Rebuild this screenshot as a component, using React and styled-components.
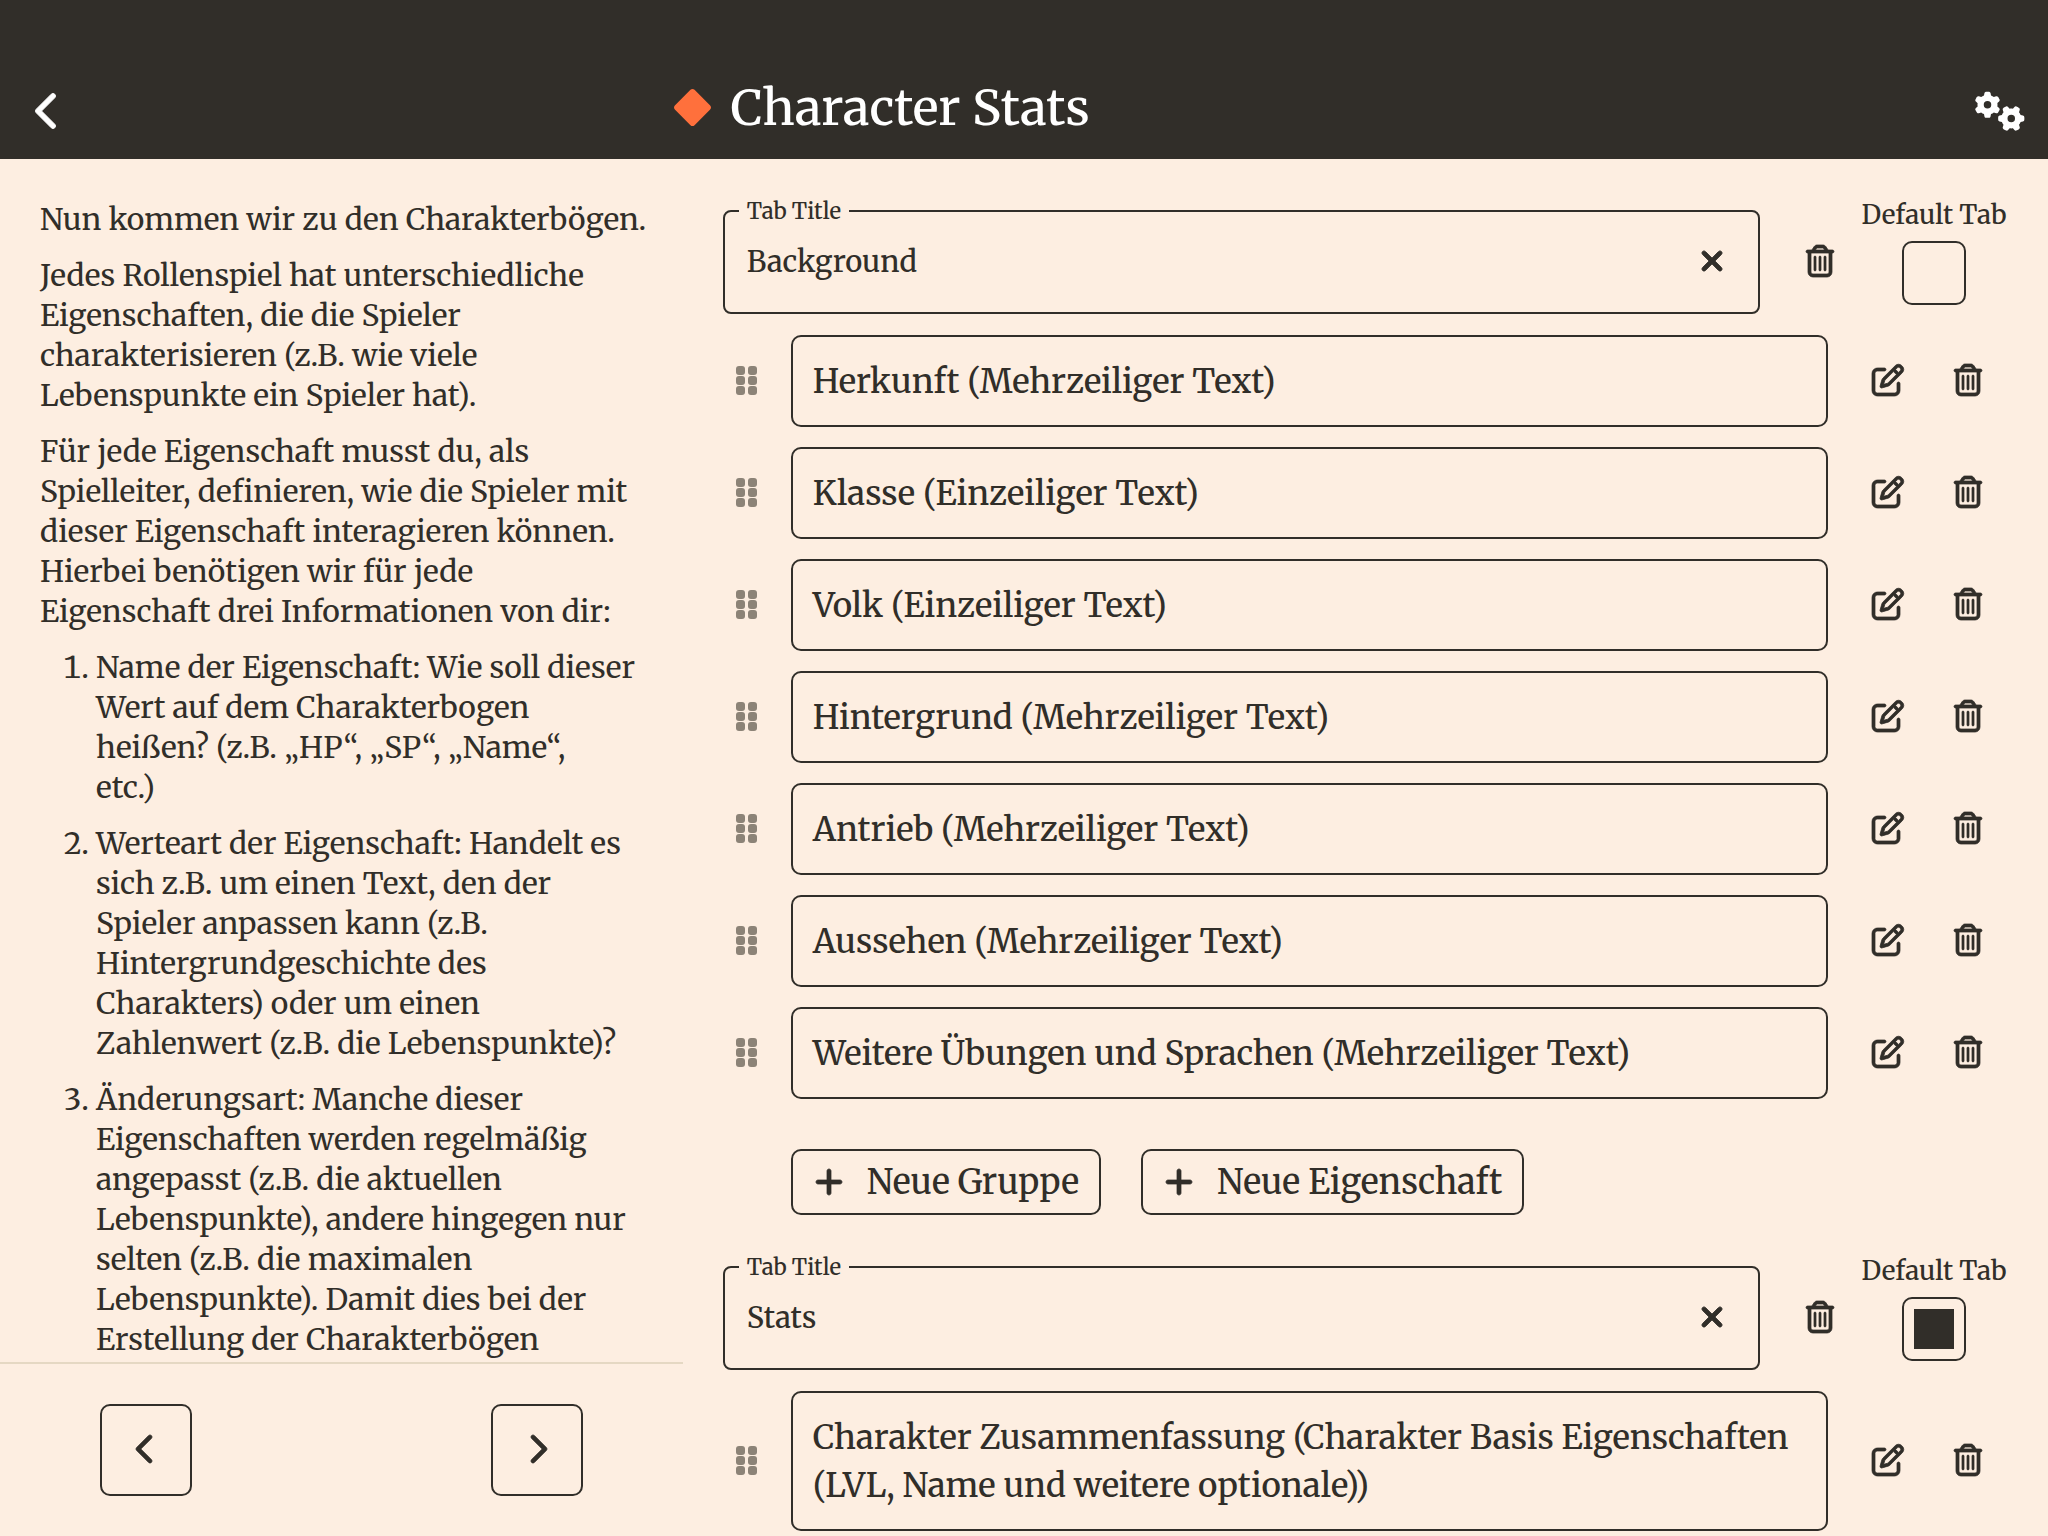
import React, { useState } from "react";
import styled, { createGlobalStyle } from "styled-components";
import {
  FaChevronLeft,
  FaChevronRight,
  FaDiamond,
  FaGears,
  FaPlus,
  FaRegPenToSquare,
  FaRegTrashCan,
  FaXmark,
} from "react-icons/fa6";

const ink = "#312e29";
const paper = "#fdeee1";

const GlobalStyle = createGlobalStyle`
  * { box-sizing: border-box; }
  html, body, #root { height: 100%; }
  body {
    margin: 0;
    background: ${paper};
    color: ${ink};
    font-family: "Merriweather", "DejaVu Serif Condensed", "DejaVu Serif", serif;
    font-weight: 500;
    font-variant-numeric: oldstyle-nums;
    overflow: hidden;
  }
  button, input { font: inherit; color: inherit; }
`;

const Screen = styled.div`
  display: flex;
  flex-direction: column;
  height: 100vh;
`;

const Header = styled.header`
  flex: none;
  display: grid;
  grid-template-columns: 1fr minmax(0, 706px) 1fr;
  align-items: center;
  padding: 62px 23px 0 28px;
  height: 159px;
  background: ${ink};
  color: #fff;
`;

const PlainButton = styled.button`
  display: flex;
  align-items: center;
  justify-content: center;
  padding: 0;
  border: 0;
  background: none;
  cursor: pointer;
`;

const BackButton = styled(PlainButton)`
  justify-self: start;

  path { stroke: currentColor; stroke-width: 12px; }
`;

const SettingsButton = styled(PlainButton)`
  justify-self: end;
`;

const Title = styled.h1`
  display: flex;
  align-items: center;
  gap: 20px;
  margin: 0;
  padding-bottom: 6px;
  font-size: 49px;
  line-height: 56px;
  font-weight: 500;
  white-space: nowrap;

  svg { color: #ff703c; }
`;

const Main = styled.main`
  flex: 1;
  min-height: 0;
  display: grid;
  grid-template-columns: minmax(0, 1fr) minmax(0, 2fr);
`;

const Guide = styled.aside`
  display: flex;
  flex-direction: column;
  min-height: 0;
`;

const GuideText = styled.div`
  flex: 1;
  min-height: 0;
  overflow: hidden;
  padding: 40px 24px 0 40px;
  font-size: 30px;
  line-height: 40px;
  font-weight: 400;

  p { margin: 0 0 16px; white-space: pre-line; }
`;

const Steps = styled.ol`
  margin: 0;
  padding-left: 56px;

  li { margin-bottom: 16px; white-space: pre-line; }
`;

const GuideNav = styled.nav`
  flex: none;
  display: flex;
  justify-content: space-between;
  padding: 40px 100px;
  border-top: 2px solid #e5d8c3;
`;

const PageButton = styled(PlainButton)`
  width: 92px;
  height: 92px;
  padding-bottom: 2px;
  border: 2px solid ${ink};
  border-radius: 10px;

  path { stroke: currentColor; stroke-width: 12px; }
`;

const Editor = styled.section`
  display: flex;
  flex-direction: column;
  gap: 40px;
  padding: 40px 40px 0;
  min-height: 0;
  overflow: hidden;
`;

const TabGroup = styled.div`
  flex: none;
  display: flex;
  flex-direction: column;
  gap: 20px;
`;

const TabRow = styled.div`
  display: flex;
  align-items: flex-start;
  height: 116px;
`;

const TitleField = styled.fieldset`
  flex: 1;
  min-width: 0;
  height: 115px;
  margin: 0 20px 0 0;
  padding: 0 26px 0 22px;
  border: 2px solid ${ink};
  border-radius: 8px;
`;

const Legend = styled.legend`
  margin-left: -8px;
  padding: 0 8px;
  font-size: 22px;
  line-height: 24px;
`;

const FieldBody = styled.div`
  display: flex;
  align-items: center;
  height: 76px;
`;

const TitleInput = styled.input`
  flex: 1;
  min-width: 0;
  padding: 2px 0 0;
  border: 0;
  outline: 0;
  background: none;
  font-size: 29px;
  line-height: 40px;
`;

const ClearButton = styled(PlainButton)`
  width: 40px;
  height: 40px;

  path { stroke: currentColor; stroke-width: 16px; }
`;

const IconButton = styled(PlainButton)`
  flex: none;
  width: 80px;
  height: 80px;
  padding-bottom: 2px;

  svg { overflow: visible; }
  path { stroke: currentColor; stroke-width: 12px; }
`;

const TabDelete = styled(IconButton)`
  align-self: center;
  margin-top: 10px;
`;

const DefaultTab = styled.label`
  flex: none;
  display: flex;
  flex-direction: column;
  align-items: center;
  gap: 10px;
  width: 148px;
  font-size: 26px;
  line-height: 32px;
  white-space: nowrap;
`;

const CheckBox = styled.input`
  appearance: none;
  width: 64px;
  height: 64px;
  margin: 0;
  padding: 10px;
  border: 2px solid ${ink};
  border-radius: 10px;
  background-clip: content-box;

  &:checked { background-color: ${ink}; }
`;

const StatList = styled.ul`
  display: flex;
  flex-direction: column;
  gap: 20px;
  margin: 0;
  padding: 0;
  list-style: none;
`;

const StatRow = styled.li`
  display: grid;
  grid-template-columns: 48px minmax(0, 1fr) 160px;
  gap: 20px;
  align-items: center;
`;

const DragHandle = styled(PlainButton)`
  height: 80px;
  padding-bottom: 2px;
  color: #8c8377;
`;

const StatBox = styled.div`
  padding: 21px 20px 19px;
  border: 2px solid ${ink};
  border-radius: 10px;
  font-size: 33px;
  line-height: 48px;
`;

const RowActions = styled.div`
  display: flex;
`;

const AddRow = styled.div`
  display: flex;
  gap: 40px;
  padding: 30px 0 0 68px;
`;

const AddButton = styled.button`
  display: flex;
  align-items: center;
  gap: 22px;
  height: 66px;
  padding: 0 20px;
  border: 2px solid ${ink};
  border-radius: 10px;
  background: none;
  font-size: 34px;
  line-height: 48px;
  cursor: pointer;

  path { stroke: currentColor; stroke-width: 12px; }
`;

function GripDots() {
  return (
    <svg width="21" height="29" viewBox="0 0 21 29" fill="currentColor" aria-hidden="true">
      {[0, 10, 20].map((y) =>
        [0, 12].map((x) => <rect key={`${x}-${y}`} x={x} y={y} width="9" height="9" rx="3" />)
      )}
    </svg>
  );
}

const tabs = [
  {
    id: "background",
    title: "Background",
    stats: [
      "Herkunft (Mehrzeiliger Text)",
      "Klasse (Einzeiliger Text)",
      "Volk (Einzeiliger Text)",
      "Hintergrund (Mehrzeiliger Text)",
      "Antrieb (Mehrzeiliger Text)",
      "Aussehen (Mehrzeiliger Text)",
      "Weitere Übungen und Sprachen (Mehrzeiliger Text)",
    ],
    canAdd: true,
  },
  {
    id: "stats",
    title: "Stats",
    stats: [
      "Charakter Zusammenfassung (Charakter Basis Eigenschaften (LVL, Name und weitere optionale))",
    ],
    canAdd: false,
  },
];

function StatTab({ tab, isDefault, onDefault }) {
  const [title, setTitle] = useState(tab.title);
  return (
    <TabGroup>
      <TabRow>
        <TitleField>
          <Legend>
            <label htmlFor={`title-${tab.id}`}>Tab Title</label>
          </Legend>
          <FieldBody>
            <TitleInput
              id={`title-${tab.id}`}
              value={title}
              onChange={(e) => setTitle(e.target.value)}
            />
            <ClearButton type="button" aria-label="Clear" onClick={() => setTitle("")}>
              <FaXmark size={32} />
            </ClearButton>
          </FieldBody>
        </TitleField>
        <TabDelete type="button" aria-label="Delete tab">
          <FaRegTrashCan size={32} />
        </TabDelete>
        <DefaultTab>
          Default Tab
          <CheckBox type="checkbox" checked={isDefault} onChange={onDefault} />
        </DefaultTab>
      </TabRow>
      <StatList>
        {tab.stats.map((stat) => (
          <StatRow key={stat}>
            <DragHandle type="button" aria-label="Move">
              <GripDots />
            </DragHandle>
            <StatBox>{stat}</StatBox>
            <RowActions>
              <IconButton type="button" aria-label="Edit">
                <FaRegPenToSquare size={32} />
              </IconButton>
              <IconButton type="button" aria-label="Delete">
                <FaRegTrashCan size={32} />
              </IconButton>
            </RowActions>
          </StatRow>
        ))}
      </StatList>
      {tab.canAdd && (
        <AddRow>
          <AddButton type="button">
            <FaPlus size={32} />
            Neue Gruppe
          </AddButton>
          <AddButton type="button">
            <FaPlus size={32} />
            Neue Eigenschaft
          </AddButton>
        </AddRow>
      )}
    </TabGroup>
  );
}

export default function App() {
  const [defaultTab, setDefaultTab] = useState("stats");
  return (
    <Screen>
      <GlobalStyle />
      <Header>
        <BackButton type="button" aria-label="Back">
          <FaChevronLeft size={40} color="#fff" />
        </BackButton>
        <Title>
          <FaDiamond size={37} />
          Character Stats
        </Title>
        <SettingsButton type="button" aria-label="Settings">
          <FaGears size={50} color="#fff" />
        </SettingsButton>
      </Header>
      <Main>
        <Guide>
          <GuideText>
            <p>Nun kommen wir zu den Charakterbögen.</p>
            <p>
              {"Jedes Rollenspiel hat unterschiedliche\nEigenschaften, die die Spieler\ncharakterisieren (z.B. wie viele\nLebenspunkte ein Spieler hat)."}
            </p>
            <p>
              {"Für jede Eigenschaft musst du, als\nSpielleiter, definieren, wie die Spieler mit\ndieser Eigenschaft interagieren können.\nHierbei benötigen wir für jede\nEigenschaft drei Informationen von dir:"}
            </p>
            <Steps>
              <li>
                {"Name der Eigenschaft: Wie soll dieser\nWert auf dem Charakterbogen\nheißen? (z.B. „HP“, „SP“, „Name“,\netc.)"}
              </li>
              <li>
                {"Werteart der Eigenschaft: Handelt es\nsich z.B. um einen Text, den der\nSpieler anpassen kann (z.B.\nHintergrundgeschichte des\nCharakters) oder um einen\nZahlenwert (z.B. die Lebenspunkte)?"}
              </li>
              <li>
                {"Änderungsart: Manche dieser\nEigenschaften werden regelmäßig\nangepasst (z.B. die aktuellen\nLebenspunkte), andere hingegen nur\nselten (z.B. die maximalen\nLebenspunkte). Damit dies bei der\nErstellung der Charakterbögen"}
              </li>
            </Steps>
          </GuideText>
          <GuideNav>
            <PageButton type="button" aria-label="Previous">
              <FaChevronLeft size={32} />
            </PageButton>
            <PageButton type="button" aria-label="Next">
              <FaChevronRight size={32} />
            </PageButton>
          </GuideNav>
        </Guide>
        <Editor>
          {tabs.map((tab) => (
            <StatTab
              key={tab.id}
              tab={tab}
              isDefault={defaultTab === tab.id}
              onDefault={() => setDefaultTab(tab.id)}
            />
          ))}
        </Editor>
      </Main>
    </Screen>
  );
}
